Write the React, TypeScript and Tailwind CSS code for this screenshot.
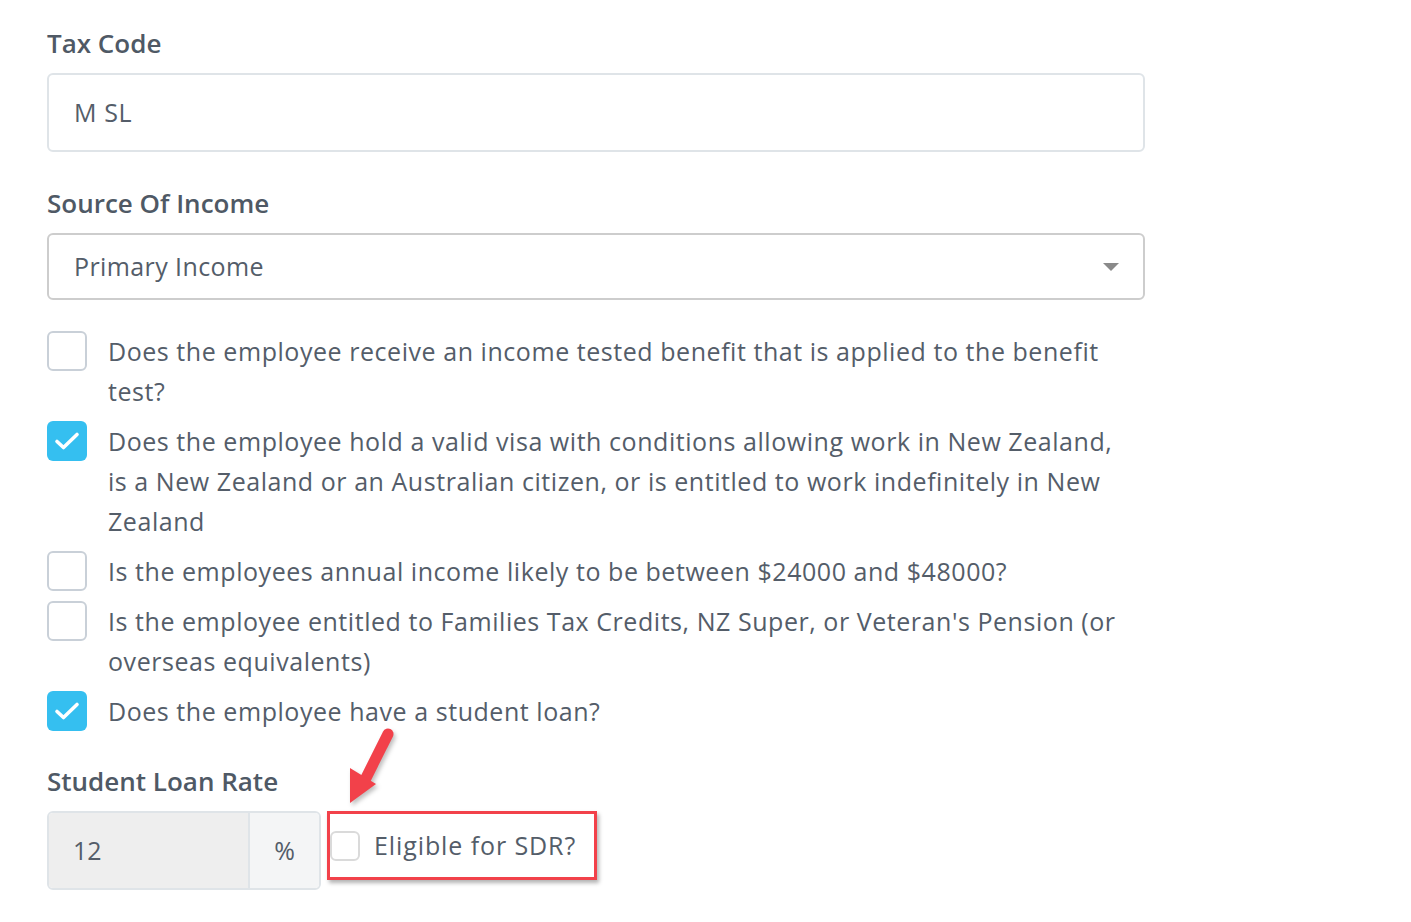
import type { ReactNode } from "react"

type Question = {
  id: string
  checked: boolean
  lines: string[]
}

const questions: Question[] = [
  {
    id: "benefit",
    checked: false,
    lines: [
      "Does the employee receive an income tested benefit that is applied to the benefit",
      "test?",
    ],
  },
  {
    id: "visa",
    checked: true,
    lines: [
      "Does the employee hold a valid visa with conditions allowing work in New Zealand,",
      "is a New Zealand or an Australian citizen, or is entitled to work indefinitely in New",
      "Zealand",
    ],
  },
  {
    id: "income",
    checked: false,
    lines: ["Is the employees annual income likely to be between $24000 and $48000?"],
  },
  {
    id: "credits",
    checked: false,
    lines: [
      "Is the employee entitled to Families Tax Credits, NZ Super, or Veteran's Pension (or",
      "overseas equivalents)",
    ],
  },
  {
    id: "loan",
    checked: true,
    lines: ["Does the employee have a student loan?"],
  },
]

function Label({ children, className = "" }: { children: ReactNode; className?: string }) {
  return (
    <div className={`text-[26px] leading-[32px] font-semibold text-[#4f5965] ${className}`}>
      {children}
    </div>
  )
}

function Checkbox({ checked }: { checked: boolean }) {
  if (checked) {
    return (
      <div className="w-10 h-10 shrink-0 rounded-[6px] bg-[#35bff0] flex items-center justify-center">
        <svg width="26" height="20" viewBox="0 0 26 20" fill="none">
          <path d="M3 10.5 L9.5 16.5 L23 3.5" stroke="white" strokeWidth="3.6" strokeLinecap="round" strokeLinejoin="round" />
        </svg>
      </div>
    )
  }
  return <div className="w-10 h-10 shrink-0 rounded-[6px] border-2 border-[#c9d0d8] bg-white" />
}

function ArrowMark() {
  return (
    <svg
      className="absolute left-[340px] top-[722px] pointer-events-none"
      width="60"
      height="92"
      viewBox="0 0 60 92"
      style={{ filter: "drop-shadow(2px 3px 2px rgba(0,0,0,0.25))" }}
    >
      <path d="M48 12 L26 56" stroke="#f2414a" strokeWidth="11" strokeLinecap="round" />
      <path d="M10 46 L36 62 L10 81 Z" fill="#f2414a" />
    </svg>
  )
}

export default function App() {
  return (
    <div
      className="relative min-h-[922px] bg-white text-[#545d69] pl-[47px] pt-[27px]"
      style={{ fontFamily: '"Open Sans", "Liberation Sans", sans-serif' }}
    >
      <div className="w-[1098px] flex flex-col">
        {/* Tax code */}
        <Label>Tax Code</Label>
        <div className="mt-[14px] h-[79px] rounded-[6px] border-2 border-[#dfe4e8] bg-white flex items-center pl-[25px] text-[25px] tracking-[0.6px]">
          M SL
        </div>

        {/* Source of income */}
        <Label className="mt-[35px]">Source Of Income</Label>
        <div className="mt-[14px] h-[67px] rounded-[6px] border-2 border-[#cdcdcd] bg-white flex items-center justify-between pl-[25px] pr-[24px] text-[25px] tracking-[0.4px]">
          <span>Primary Income</span>
          <svg width="16" height="8" viewBox="0 0 16 8">
            <path d="M0 0 L16 0 L8 8 Z" fill="#8a8a8a" />
          </svg>
        </div>

        {/* Questions */}
        <div className="mt-[31px] flex flex-col gap-[10px]">
          {questions.map((q) => (
            <div key={q.id} className="flex items-start gap-[21px]">
              <Checkbox checked={q.checked} />
              <div className="text-[25px] leading-[40px] tracking-[0.55px]">
                {q.lines.map((line, i) => (
                  <div key={i} className="whitespace-nowrap">{line}</div>
                ))}
              </div>
            </div>
          ))}
        </div>

        {/* Student loan rate */}
        <Label className="mt-[34px]">Student Loan Rate</Label>
        <div className="mt-[14px] flex items-start gap-[6px]">
          <div className="w-[274px] h-[79px] rounded-[6px] border-2 border-[#dfe4e8] flex overflow-hidden text-[25px]">
            <div className="flex-1 bg-[#eeeeee] flex items-center pl-[24px]">12</div>
            <div className="w-[71px] bg-[#f4f5f6] border-l-2 border-[#dfe4e8] flex items-center justify-center">%</div>
          </div>
          <div className="w-[270px] h-[69px] border-[3px] border-[#f2414a] shadow-[2px_3px_4px_rgba(0,0,0,0.3)] flex items-center gap-[14px]">
            <div className="w-[30px] h-[30px] rounded-[6px] border-2 border-[#dadada] bg-white" />
            <span className="text-[25px] tracking-[0.9px]">Eligible for SDR?</span>
          </div>
        </div>
      </div>

      <ArrowMark />
    </div>
  )
}
